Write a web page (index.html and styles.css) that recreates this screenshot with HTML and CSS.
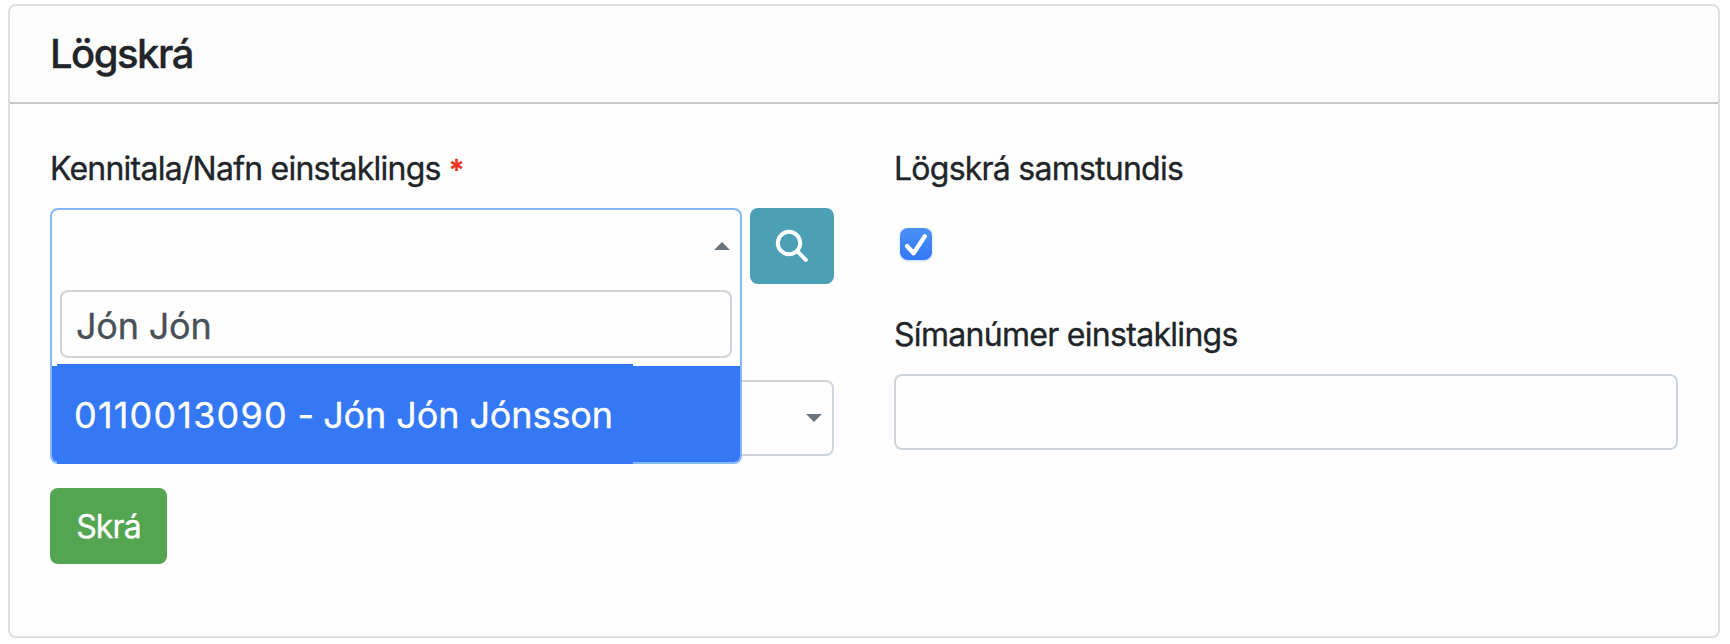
FILE: index.html
```html
<!DOCTYPE html>
<html lang="is">
<head>
<meta charset="utf-8">
<title>Lögskrá</title>
<link rel="stylesheet" href="styles.css">
</head>
<body>
<section class="card">
  <header class="card-header"><h1 class="card-title"><span>Lögskrá</span></h1></header>
  <form class="card-body">
    <div class="column">
      <div class="label"><span class="label-person">Kennitala/Nafn einstaklings </span><span class="required">*</span></div>
      <div class="person-row">
        <div class="picker">
          <div class="picker-value"><svg class="caret" viewBox="0 0 16 8"><path d="M0 8 8 0l8 8z"/></svg></div>
          <div class="picker-menu">
            <div class="picker-search"><span>Jón Jón</span></div>
            <div class="picker-option"><span class="option-text"><span class="option-id">0110013090</span><span class="option-dash"> - </span>Jón Jón Jónsson</span></div>
          </div>
        </div>
        <button class="search-button" type="button" aria-label="Leita">
          <svg class="search-icon" viewBox="0 0 34 34"><circle cx="14" cy="14" r="11.2"/><path d="m22.2 22.2 8.6 8.6"/></svg>
        </button>
      </div>
      <div class="select"><svg class="caret" viewBox="0 0 16 8"><path d="M0 0h16L8 8z"/></svg></div>
      <button class="submit" type="button"><span>Skrá</span></button>
    </div>
    <div class="column">
      <div class="label"><span class="label-instant">Lögskrá samstundis</span></div>
      <div class="checkbox"><svg class="check" viewBox="0 0 32 32"><path d="m7.2 18.2 6.4 7 11.2-16.8"/></svg></div>
      <div class="label label-second"><span class="label-phone">Símanúmer einstaklings</span></div>
      <div class="input"></div>
    </div>
  </form>
</section>
</body>
</html>
```
FILE: styles.css
```css
* { box-sizing: border-box; }
body {
  margin: 0;
  padding: 4px 10px 6px 8px;
  height: 644px;
  background: #fff;
  color: #212529;
  font: 400 32px/48px Inter, "Liberation Sans", sans-serif;
  -webkit-text-stroke: 0.35px currentColor;
  overflow: hidden;
}
.card {
  height: 634px;
  border: 2px solid #dfdfdf;
  border-radius: 8px;
  background: #fefefe;
}
.card-header {
  height: 98px;
  padding: 24px 40px;
  border-bottom: 2px solid #c8c8c8;
  border-radius: 6px 6px 0 0;
  background: #fcfcfc;
}
.card-title {
  margin: 0;
  font-size: 40px;
  line-height: 48px;
  font-weight: 500;
  letter-spacing: -1.5px;
}
.card-body {
  display: grid;
  grid-template-columns: 784px 784px;
  column-gap: 60px;
  padding: 40px;
}
.column {
  display: flex;
  flex-direction: column;
  align-items: flex-start;
}
.label {
  height: 48px;
  padding-top: 1px;
  margin-bottom: 16px;
  white-space: nowrap;
}
.label-person { letter-spacing: -0.77px; }
.label-instant { letter-spacing: -0.76px; }
.label-phone { letter-spacing: -0.7px; }
.required {
  color: #ea3323;
  font-size: 29px;
  font-weight: 600;
}
.person-row {
  display: flex;
  gap: 8px;
  width: 100%;
  height: 76px;
}
.picker {
  position: relative;
  z-index: 1;
  width: 692px;
  height: 256px;
  border: 2px solid #86b7fe;
  border-radius: 8px;
  background: #fefefe;
}
.picker-value, .select {
  display: flex;
  align-items: center;
  justify-content: flex-end;
}
.picker-value {
  height: 72px;
  padding-right: 10px;
}
.caret {
  width: 16px;
  height: 8px;
  fill: #6c757d;
}
.picker-search {
  width: 672px;
  height: 68px;
  margin: 8px 8px 8px;
  padding: 10px 14px;
  border: 2px solid #ced4da;
  border-radius: 8px;
  color: #495057;
  font-size: 36px;
  line-height: 48px;
  letter-spacing: -0.2px;
}
.picker-option {
  position: relative;
  height: 96px;
  padding: 0 22px;
  border-radius: 0 0 6px 6px;
  background: #3478f6;
  color: #fff;
  font-size: 36px;
  line-height: 98px;
  letter-spacing: -0.1px;
  white-space: nowrap;
}
.picker-option::before {
  content: "";
  position: absolute;
  left: 5px;
  top: -2px;
  width: 576px;
  height: 100px;
  background: #3478f6;
}
.option-text { position: relative; }
.option-id { letter-spacing: 1.18px; }
.option-dash { letter-spacing: -0.5px; }
.search-button {
  display: flex;
  align-items: center;
  justify-content: center;
  width: 84px;
  height: 76px;
  padding: 0;
  border: 0;
  border-radius: 8px;
  background: #4ca0b5;
}
.search-icon {
  width: 34px;
  height: 34px;
  fill: none;
  stroke: #fff;
  stroke-width: 4;
  stroke-linecap: round;
}
.select {
  width: 784px;
  height: 76px;
  margin-top: 96px;
  padding-right: 10px;
  border: 2px solid #ced4da;
  border-radius: 8px;
}
.submit {
  width: 117px;
  height: 76px;
  margin-top: 32px;
  padding: 2px 0 0;
  border: 0;
  border-radius: 8px;
  background: #53a551;
  color: #fff;
  font: inherit;
  letter-spacing: -0.9px;
}
.checkbox {
  width: 32px;
  height: 32px;
  margin: 20px 0 50px 6px;
  border-radius: 8px;
  background: linear-gradient(#4b91f7, #3277f6);
  box-shadow: 0 1px 3px rgba(52, 120, 246, .3);
}
.check {
  display: block;
  width: 32px;
  height: 32px;
  fill: none;
  stroke: #fff;
  stroke-width: 4.4;
  stroke-linecap: round;
  stroke-linejoin: round;
}
.input {
  width: 784px;
  height: 76px;
  border: 2px solid #ced4da;
  border-radius: 8px;
}
```
